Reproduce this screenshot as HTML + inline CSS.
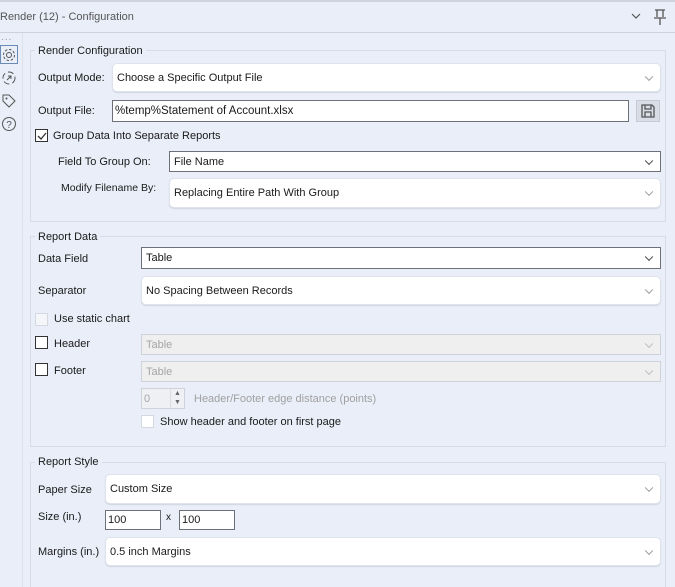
<!DOCTYPE html>
<html><head><style>
*{box-sizing:border-box;margin:0;padding:0}
html,body{width:675px;height:587px;overflow:hidden}
body{background:#e9eef8;font-family:"Liberation Sans",Arial,sans-serif;font-size:11px;color:#1a1a1a;position:relative}
.a{position:absolute}
.t{position:absolute;white-space:nowrap;line-height:14px}
.grp{position:absolute;border:1px solid #d6dbe6}
.gt{position:absolute;background:#e9eef8;padding:0 3px;white-space:nowrap;line-height:14px}
.sel{position:absolute;background:#fff;border-radius:5px;border:1px solid #dde2ec;box-shadow:0 1px 1px #d0d5e0}
.selb{position:absolute;background:#fff;border:1px solid #6e7079}
.dis{position:absolute;background:#efefef;border:1px solid #cfd2d8;color:#a5a5a5}
.v{position:absolute;right:8px;top:50%;width:6px;height:6px;border-right:1px solid #999;border-bottom:1px solid #999;transform:translateY(-70%) rotate(45deg)}
.in{position:absolute;left:4px;top:50%;transform:translateY(-50%);white-space:nowrap}
.cb{position:absolute;width:13px;height:13px;border:1px solid #333;background:#fff}
.cbd{position:absolute;width:13px;height:13px;border:1px solid #d4d8e0;background:#f4f6fa}
</style></head><body>
<div class="a" style="left:0;top:0;width:675px;height:2px;background:#cfd3dc"></div>
<div class="t" style="left:0;top:10px;color:#555">Render (12) - Configuration</div>
<svg class="a" style="left:630px;top:11px" width="12" height="10"><path d="M2 3 L6 7 L10 3" fill="none" stroke="#555" stroke-width="1.2"/></svg>
<svg class="a" style="left:652px;top:8px" width="16" height="18"><path d="M3 2 H13 M5 2 V9 M11 2 V9 M2 10 H14 M8 10 V17" fill="none" stroke="#555" stroke-width="1.3"/></svg>
<div class="a" style="left:0;top:32px;width:675px;height:1px;background:#cdd1da"></div>
<div class="t" style="left:1px;top:31px;color:#999;font-size:10px;letter-spacing:1px">...</div>
<div class="a" style="left:0;top:45px;width:18px;height:19px;border:1px solid #6a8bb5"></div>
<svg class="a" style="left:1px;top:47px" width="16" height="16"><circle cx="8" cy="8" r="2.5" fill="none" stroke="#555"/><circle cx="8" cy="8" r="5.5" fill="none" stroke="#555" stroke-dasharray="2.5 1.8"/></svg>
<svg class="a" style="left:1px;top:70px" width="16" height="16"><circle cx="8" cy="8" r="6" fill="none" stroke="#555" stroke-dasharray="6 3"/><path d="M6 10 L10 6 M7 6 H10 V9" fill="none" stroke="#555"/></svg>
<svg class="a" style="left:1px;top:93px" width="16" height="16"><path d="M2 2 H8 L14 8 L8 14 L2 8 Z" fill="none" stroke="#555"/><circle cx="5.5" cy="5.5" r="1" fill="#555"/></svg>
<svg class="a" style="left:1px;top:116px" width="16" height="16"><circle cx="8" cy="8" r="6.5" fill="none" stroke="#555"/><text x="8" y="12" font-size="10" text-anchor="middle" fill="#555" font-family="Liberation Sans">?</text></svg>
<div class="a" style="left:22px;top:33px;width:1px;height:554px;background:#dde1ea"></div>

<div class="grp" style="left:30px;top:50px;width:636px;height:172px"></div>
<div class="gt" style="left:35px;top:44px">Render Configuration</div>
<div class="t" style="left:38px;top:71px">Output Mode:</div>
<div class="sel" style="left:112px;top:63px;width:549px;height:29px"><span class="in">Choose a Specific Output File</span><span class="v"></span></div>
<div class="t" style="left:38px;top:104px">Output File:</div>
<div class="selb" style="left:112px;top:100px;width:517px;height:22px"><span class="in" style="left:2px;font-size:11.5px">%temp%Statement of Account.xlsx</span></div>
<div class="a" style="left:636px;top:100px;width:24px;height:22px;background:#d9dde6;border:1px solid #c5cad4"></div>
<svg class="a" style="left:640px;top:103px" width="16" height="16"><path d="M2 2 H12 L14 4 V14 H2 Z M5 2 V6 H11 V2 M5 14 V9 H11 V14" fill="none" stroke="#555" stroke-width="1.3"/></svg>
<div class="cb" style="left:35px;top:129px"></div>
<svg class="a" style="left:36px;top:130px" width="12" height="12"><path d="M2 6 L5 9 L10 3" fill="none" stroke="#333" stroke-width="1.3"/></svg>
<div class="t" style="left:53px;top:129px">Group Data Into Separate Reports</div>
<div class="t" style="left:58px;top:155px">Field To Group On:</div>
<div class="selb" style="left:169px;top:151px;width:492px;height:21px"><span class="in">File Name</span><span class="v" style="border-color:#444"></span></div>
<div class="t" style="left:61px;top:181px;font-size:10.5px">Modify Filename By:</div>
<div class="sel" style="left:169px;top:178px;width:492px;height:30px"><span class="in">Replacing Entire Path With Group</span><span class="v"></span></div>

<div class="grp" style="left:30px;top:236px;width:636px;height:211px"></div>
<div class="gt" style="left:35px;top:230px">Report Data</div>
<div class="t" style="left:38px;top:252px">Data Field</div>
<div class="selb" style="left:141px;top:247px;width:520px;height:22px"><span class="in">Table</span><span class="v" style="border-color:#444"></span></div>
<div class="t" style="left:38px;top:284px">Separator</div>
<div class="sel" style="left:141px;top:276px;width:520px;height:29px"><span class="in">No Spacing Between Records</span><span class="v"></span></div>
<div class="cbd" style="left:35px;top:313px"></div>
<div class="t" style="left:54px;top:312px">Use static chart</div>
<div class="cb" style="left:35px;top:336px"></div>
<div class="t" style="left:54px;top:337px">Header</div>
<div class="dis" style="left:141px;top:334px;width:520px;height:21px"><span class="in">Table</span><span class="v" style="border-color:#bbb"></span></div>
<div class="cb" style="left:35px;top:363px"></div>
<div class="t" style="left:54px;top:364px">Footer</div>
<div class="dis" style="left:141px;top:361px;width:520px;height:21px"><span class="in">Table</span><span class="v" style="border-color:#bbb"></span></div>
<div class="dis" style="left:141px;top:388px;width:44px;height:21px;background:#eef0f4"><span class="in" style="left:2px">0</span></div>
<div class="a" style="left:170px;top:389px;width:14px;height:19px;border-left:1px solid #ddd;font-size:7px;color:#666;text-align:center;line-height:9px">▲<br>▼</div>
<div class="t" style="left:194px;top:392px;color:#a0a0a0">Header/Footer edge distance (points)</div>
<div class="cbd" style="left:141px;top:415px;background:#fff"></div>
<div class="t" style="left:160px;top:415px">Show header and footer on first page</div>

<div class="grp" style="left:30px;top:462px;width:636px;height:140px"></div>
<div class="gt" style="left:35px;top:455px">Report Style</div>
<div class="t" style="left:38px;top:483px">Paper Size</div>
<div class="sel" style="left:105px;top:474px;width:556px;height:30px"><span class="in">Custom Size</span><span class="v"></span></div>
<div class="t" style="left:38px;top:510px">Size (in.)</div>
<div class="selb" style="left:105px;top:510px;width:56px;height:20px"><span class="in" style="left:2px">100</span></div>
<div class="t" style="left:166px;top:511px;font-size:10px">x</div>
<div class="selb" style="left:179px;top:510px;width:56px;height:20px"><span class="in" style="left:2px">100</span></div>
<div class="t" style="left:38px;top:545px">Margins (in.)</div>
<div class="sel" style="left:105px;top:537px;width:556px;height:29px"><span class="in">0.5 inch Margins</span><span class="v"></span></div>
</body></html>
